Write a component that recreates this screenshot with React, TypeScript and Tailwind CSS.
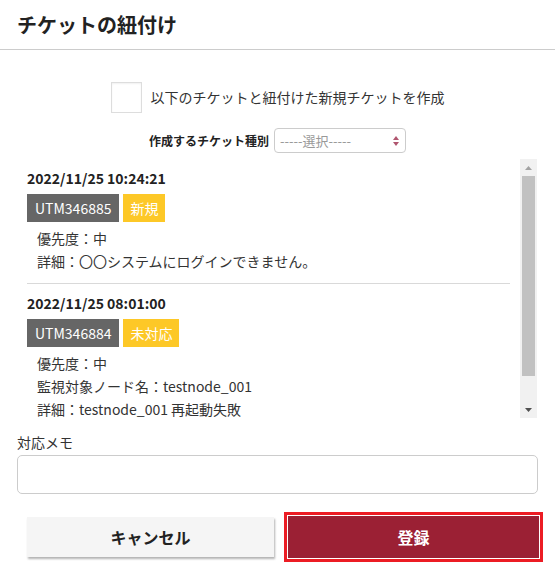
import React from 'react';

type Ticket = {
  date: string;
  id: string;
  status: string;
  lines: string[];
};

const tickets: Ticket[] = [
  {
    date: '2022/11/25 10:24:21',
    id: 'UTM346885',
    status: '新規',
    lines: ['優先度：中', '詳細：〇〇システムにログインできません。'],
  },
  {
    date: '2022/11/25 08:01:00',
    id: 'UTM346884',
    status: '未対応',
    lines: ['優先度：中', '監視対象ノード名：testnode_001', '詳細：testnode_001 再起動失敗'],
  },
];

const TicketItem: React.FC<{ ticket: Ticket; last: boolean }> = ({ ticket, last }) => (
  <div className={`pt-[9px] ${last ? 'pb-[12px]' : 'pb-[10px] border-b border-[#d9d9d9]'}`}>
    <div className="text-[14px] leading-[20px] font-bold text-[#222]">{ticket.date}</div>
    <div className="mt-[6px] flex gap-[4px]">
      <span className="h-[28px] px-[8px] flex items-center bg-[#666666] text-white text-[14px]">{ticket.id}</span>
      <span className="h-[28px] px-[7px] flex items-center bg-[#fdc827] text-white text-[14px]">{ticket.status}</span>
    </div>
    <div className="mt-[5px] pl-[10px] text-[14px] leading-[23px] text-[#333]">
      {ticket.lines.map((l) => (
        <div key={l}>{l}</div>
      ))}
    </div>
  </div>
);

const App: React.FC = () => {
  return (
    <div
      className="w-[555px] h-[578px] bg-white overflow-hidden"
      style={{ fontFamily: '"Noto Sans CJK JP", "Noto Sans", sans-serif' }}
    >
      {/* Header */}
      <div className="h-[50px] px-[17px] flex items-center border-b border-[#cccccc]">
        <h1 className="text-[20px] font-bold text-[#222]">チケットの紐付け</h1>
      </div>

      {/* Create-new checkbox */}
      <div className="mt-[32px] flex items-center justify-center gap-[9px]">
        <span className="w-[31px] h-[31px] border border-[#dddddd] bg-white shadow-[inset_0_1px_2px_rgba(0,0,0,0.06)]" />
        <span className="text-[14px] text-[#333]">以下のチケットと紐付けた新規チケットを作成</span>
      </div>

      {/* Ticket type select */}
      <div className="mt-[15px] flex items-center justify-center gap-[5px]">
        <span className="text-[12px] font-bold text-[#222]">作成するチケット種別</span>
        <div className="w-[132px] h-[25px] border border-[#cccccc] rounded-[4px] flex items-center justify-between pl-[5px] pr-[6px]">
          <span className="text-[13px] text-[#999]">-----選択-----</span>
          <svg width="6" height="10" viewBox="0 0 6 10">
            <path d="M3 0 L6 4 L0 4 Z" fill="#b0566f" />
            <path d="M0 6 L6 6 L3 10 Z" fill="#b0566f" />
          </svg>
        </div>
      </div>

      {/* Ticket list */}
      <div className="mt-[6px] ml-[17px] mr-[18px] h-[259px] flex">
        <div className="flex-1 overflow-hidden px-[10px]">
          {tickets.map((t, i) => (
            <TicketItem key={t.id} ticket={t} last={i === tickets.length - 1} />
          ))}
        </div>
        <div className="w-[17px] bg-[#f1f1f1] flex flex-col">
          <div className="h-[17px] flex items-center justify-center">
            <svg width="7" height="4" viewBox="0 0 7 4">
              <path d="M3.5 0 L7 4 L0 4 Z" fill="#a3a3a3" />
            </svg>
          </div>
          <div className="mx-[2px] h-[200px] bg-[#c1c1c1]" />
          <div className="flex-1" />
          <div className="h-[17px] flex items-center justify-center">
            <svg width="7" height="4" viewBox="0 0 7 4">
              <path d="M0 0 L7 0 L3.5 4 Z" fill="#505050" />
            </svg>
          </div>
        </div>
      </div>

      {/* Memo */}
      <div className="mt-[14px] px-[17px]">
        <div className="text-[14px] leading-[20px] text-[#333]">対応メモ</div>
        <textarea className="mt-[3px] block w-[521px] h-[39px] border border-[#cccccc] rounded-[5px] resize-none outline-none" />
      </div>

      {/* Buttons */}
      <div className="mt-[22px] flex items-center">
        <button className="ml-[27px] w-[247px] h-[40px] bg-[#f5f5f5] shadow-[1px_2px_2px_rgba(0,0,0,0.3)] text-[16px] font-bold text-[#222]">
          キャンセル
        </button>
        <button className="ml-[14px] w-[251px] h-[42px] bg-[#9b2034] text-white text-[16px] font-bold outline-[3px] outline-solid outline-[#ec1c24] outline-offset-[1px]">
          登録
        </button>
      </div>
    </div>
  );
};

export default App;
